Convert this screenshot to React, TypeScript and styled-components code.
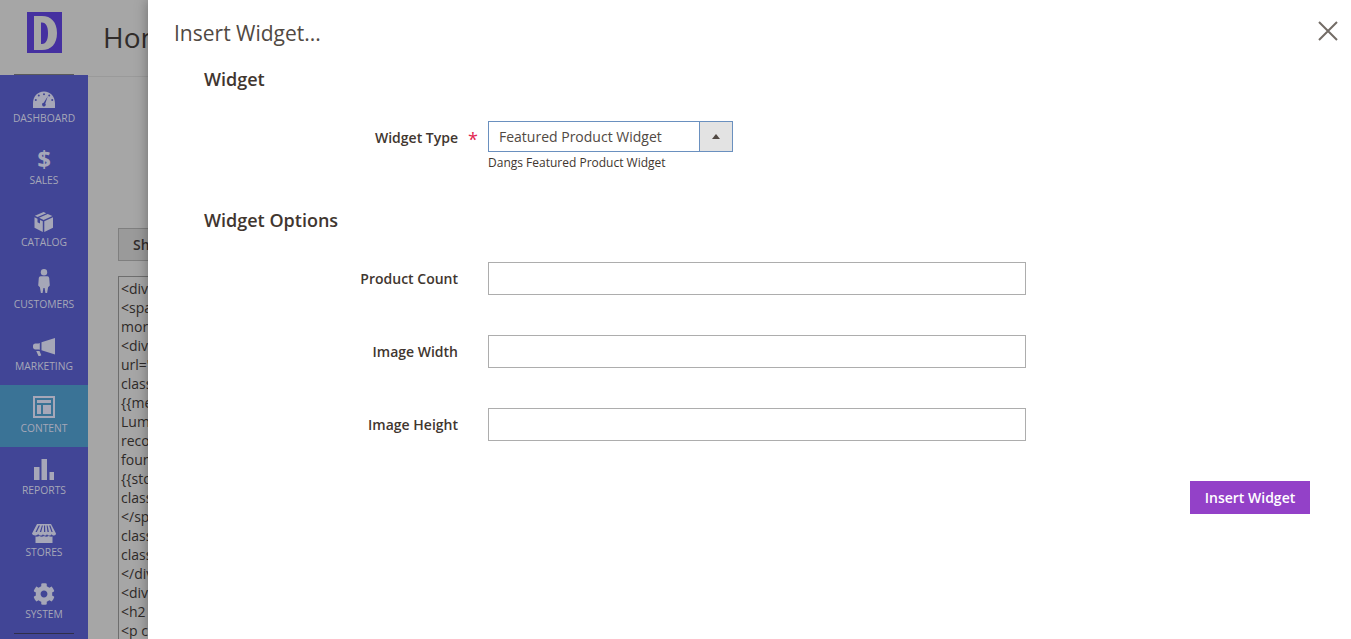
import React from 'react';
import {FaCog} from 'react-icons/fa';
import styled, {createGlobalStyle} from 'styled-components';

const GlobalStyle = createGlobalStyle`
  html, body {
    margin: 0;
    padding: 0;
    background: #a6a6a6;
  }
  body {
    font-family: "Open Sans", "Liberation Sans", sans-serif;
    overflow: hidden;
  }
  * {
    box-sizing: border-box;
  }
`;

const SOURCE_LINES = [
  '<div class="blocks-promo">',
  '<span class="content bg-white"><strong>New Luma Yoga Collection</strong> Get fit and look fab',
  'more',
  '<div data-content-type="html"',
  'url="{{store url=""}}"',
  'class="block-promo home-main">',
  '{{media url="wysiwyg/home/home-main.jpg"}}',
  'Luma',
  'recommends',
  'found',
  '{{store url="collections/yoga-new.html"}}',
  'class="action more button"',
  '</span>',
  'class="block-promo home-pants"',
  'class="content"',
  '</div>',
  '<div class="content-heading">',
  '<h2 class="title">Hot Sellers</h2>',
  '<p class="info">',
];

const DashboardIcon = () => (
  <svg viewBox="0 0 24 24" fill="currentColor">
    <path
      fillRule="evenodd"
      d="M12 6.500C5.600 6.500 1 11.600 1 18.200V23h22v-4.800C23 11.600 18.400 6.500 12 6.500ZM12 8.200a1 1 0 1 1 0 2 1 1 0 0 1 0-2ZM6.800 9.600a1 1 0 1 1 0 2 1 1 0 0 1 0-2ZM17.200 9.600a1 1 0 1 1 0 2 1 1 0 0 1 0-2ZM3.800 14a1 1 0 1 1 0 2 1 1 0 0 1 0-2ZM20.200 14a1 1 0 1 1 0 2 1 1 0 0 1 0-2ZM15.800 11.300l-2.500 7.100a1.800 1.800 0 1 1-1.600-.6l4.100-6.500Z"
    />
  </svg>
);

const CatalogIcon = () => (
  <svg viewBox="0 0 24 24" fill="currentColor">
    <path d="M11.600 3 2.900 6.800l2.700 1.300 8.700-3.900-2.700-1.200ZM15.700 4.900 7.100 8.800l4.500 2.100 8.800-3.900-4.700-2.100ZM2.500 8.300v10.500l8.300 4.200V12.300L8 11v3.500L5.500 13.300V9.700L2.500 8.300ZM21 8.300l-8.700 4V23l8.700-4.200V8.300Z" />
  </svg>
);

const CustomersIcon = () => (
  <svg viewBox="0 0 24 24" fill="currentColor">
    <circle cx="12" cy="1.200" r="3.200" />
    <path d="M8.700 5.200h6.600c1.100 0 1.800.8 1.900 1.900l.6 7.400-1.700 1.800-1 5.700h-1.700l-.8-5h-1.200l-.8 5H8.900l-1-5.700-1.700-1.800.6-7.400c.1-1.100.8-1.900 1.900-1.900Z" />
  </svg>
);

const MarketingIcon = () => (
  <svg viewBox="0 0 24 24" fill="currentColor">
    <path d="M23 5v16.500L9.500 17.200V9.300L23 5ZM7.800 10v6.700l-1.300-.2H3.400C2 16.500 1 15.400 1 14.300v-1.600c0-1.200 1-2.200 2.400-2.200h3.100l1.300-.500ZM4.200 18h3.300l1.800 4.300-1.300.7H6.500L4.200 18Z" />
  </svg>
);

const ContentIcon = () => (
  <svg viewBox="0 0 24 24" fill="currentColor">
    <path
      fillRule="evenodd"
      d="M1 1h22v22H1V1Zm2 2v18h18V3H3Zm2 2h14v3H5V5Zm0 5h4v9H5v-9Zm6 0h8v9h-8v-9Z"
    />
  </svg>
);

const ReportsIcon = () => (
  <svg viewBox="0 0 24 24" fill="currentColor">
    <path d="M2 10h5.500v13H2V10ZM9.500 2H15v21H9.500V2ZM17.500 15H22v8h-4.500v-8Z" />
  </svg>
);

const StoresIcon = () => (
  <svg viewBox="0 0 24 24" fill="currentColor">
    <path
      fillRule="evenodd"
      d="M5 5h14l5 9.500c0 1.300-1 2-2 2s-2-.4-2.400-1.300c-.4.900-1.300 1.300-2.300 1.300s-1.900-.4-2.300-1.300c-.4.900-1.300 1.300-2 1.300s-1.600-.4-2-1.300c-.4.900-1.300 1.300-2.300 1.300s-1.900-.4-2.300-1.300C4.900 16.100 4 16.500 3 16.500s-3-.7-3-2L5 5Zm1.600 1.600L3.500 13h1.300l3.200-6.400H6.600Zm3.300 0L7.800 13h1.400l1.700-6.400h-1Zm2.100 0V13h1.300L13.100 6.600H12Zm2.600 0L15.500 13h1.400l-1.300-6.400h-1Zm2.500 0L19.500 13h1.200l-2.300-6.400h-1.300Z"
    />
    <path d="M3.500 17.600c1.400.3 2.800 0 3.800-.6 1.400.8 3.200.9 4.700 0 1.500.9 3.300.8 4.700 0 1 .6 2.400.9 3.800.6V24h-17v-6.400Z" />
  </svg>
);

const NAV_ITEMS = [
  {label: 'Dashboard', icon: <DashboardIcon />},
  {label: 'Sales', glyph: '$'},
  {label: 'Catalog', icon: <CatalogIcon />},
  {label: 'Customers', icon: <CustomersIcon />},
  {label: 'Marketing', icon: <MarketingIcon />},
  {label: 'Content', icon: <ContentIcon />, active: true},
  {label: 'Reports', icon: <ReportsIcon />},
  {label: 'Stores', icon: <StoresIcon />},
  {label: 'System', icon: <SystemIcon />},
];

const WIDGET_OPTIONS = ['Product Count', 'Image Width', 'Image Height'];

export default function App() {
  return (
    <Page>
      <GlobalStyle />
      <Sidebar>
        <LogoCell>
          <LogoMark>
            <svg viewBox="0 0 35 41" width="35" height="41">
              <rect width="35" height="41" fill="#4530a0" />
              <path
                fill="#a6a6a6"
                fillRule="evenodd"
                d="M7 4h8c9 0 15 6 15 17s-6 17-15 17H7V4Zm7 6.500v21.500h1c4 0 6-4 6-10.700s-2-10.800-6-10.800h-1Z"
              />
            </svg>
          </LogoMark>
        </LogoCell>
        {NAV_ITEMS.map(item => (
          <NavItem key={item.label} $active={item.active}>
            <NavIcon>
              {item.glyph ? <DollarGlyph>{item.glyph}</DollarGlyph> : item.icon}
            </NavIcon>
            <NavLabel>{item.label}</NavLabel>
          </NavItem>
        ))}
        <NavDivider />
      </Sidebar>

      <Main>
        <PageHeader>
          <PageTitle>Home page</PageTitle>
        </PageHeader>
        <ShowButton>Show / Hide Editor</ShowButton>
        <SourceBox>
          {SOURCE_LINES.map((line, i) => (
            <SourceLine key={i}>{line}</SourceLine>
          ))}
        </SourceBox>
      </Main>

      <Modal>
        <ModalHeader>
          <ModalTitle>Insert Widget...</ModalTitle>
          <CloseButton aria-label="Close">
            <svg viewBox="0 0 20 20" width="20" height="20">
              <path
                d="M1 1l18 18M19 1L1 19"
                stroke="#736c66"
                strokeWidth="2"
                fill="none"
              />
            </svg>
          </CloseButton>
        </ModalHeader>

        <ModalBody>
          <SectionTitle>Widget</SectionTitle>
          <TypeRow>
            <TypeLabel>
              Widget Type<Required>*</Required>
            </TypeLabel>
            <div>
              <SelectBox>
                <SelectValue>Featured Product Widget</SelectValue>
                <SelectArrow>
                  <svg viewBox="0 0 8 5" width="8" height="5">
                    <path d="M4 0l4 5H0z" fill="#514943" />
                  </svg>
                </SelectArrow>
              </SelectBox>
              <FieldHint>Dangs Featured Product Widget</FieldHint>
            </div>
          </TypeRow>

          <OptionsTitle>Widget Options</OptionsTitle>
          <OptionList>
            {WIDGET_OPTIONS.map(option => (
              <FormRow key={option}>
                <FieldLabel>{option}</FieldLabel>
                <TextInput type="text" />
              </FormRow>
            ))}
          </OptionList>

          <Actions>
            <PrimaryButton>Insert Widget</PrimaryButton>
          </Actions>
        </ModalBody>
      </Modal>
    </Page>
  );
}

function SystemIcon() {
  return <GearIcon />;
}

const Page = styled.div`
  position: relative;
  display: flex;
  width: 1351px;
  height: 639px;
  overflow: hidden;
  background: #a6a6a6;
`;

const Sidebar = styled.nav`
  flex: 0 0 88px;
  display: flex;
  flex-direction: column;
  background: #414596;
`;

const LogoCell = styled.div`
  position: relative;
  flex: 0 0 75px;
  display: flex;
  align-items: flex-start;
  justify-content: center;
  padding-top: 12px;
  background: #a6a6a6;
  &::after {
    content: '';
    position: absolute;
    left: 14px;
    bottom: 0;
    width: 60px;
    height: 1px;
    background: #5a5a5a;
  }
`;

const LogoMark = styled.div`
  width: 35px;
  height: 41px;
  svg {
    display: block;
  }
`;

const NavItem = styled.a<{$active?: boolean}>`
  flex: 0 0 62px;
  display: flex;
  flex-direction: column;
  align-items: center;
  padding-top: 10px;
  color: #a6a7b8;
  background: ${p => (p.$active ? '#3a7396' : 'transparent')};
`;

const NavIcon = styled.span`
  display: block;
  width: 24px;
  height: 24px;
  svg {
    display: block;
    width: 24px;
    height: 24px;
    overflow: visible;
  }
`;

const GearIcon = styled(FaCog)`
  && {
    width: 22px;
    height: 22px;
    margin: 2px 1px 0;
  }
`;

const DollarGlyph = styled.span`
  display: block;
  text-align: center;
  font-size: 24px;
  line-height: 24px;
  font-weight: 700;
`;

const NavLabel = styled.span`
  margin-top: 2px;
  font-size: 10.300px;
  line-height: 14px;
  text-transform: uppercase;
`;

const NavDivider = styled.div`
  flex: 0 0 1px;
  width: 60px;
  margin: 0 auto;
  background: #2f2f4a;
`;

const Main = styled.main`
  flex: 1;
  min-width: 0;
`;

const PageHeader = styled.header`
  height: 77px;
  padding: 18px 15px 0;
  border-bottom: 1px solid #9a9a9a;
`;

const PageTitle = styled.h1`
  margin: 0;
  font-size: 28px;
  line-height: 38px;
  font-weight: 400;
  color: #302c2a;
  white-space: nowrap;
`;

const ShowButton = styled.div`
  width: 170px;
  height: 33px;
  margin: 151px 0 0 30px;
  padding-left: 14px;
  border: 1px solid #7f7f7f;
  background: #9a9a9a;
  font-size: 14px;
  font-weight: 600;
  line-height: 31px;
  color: #302c2a;
  white-space: nowrap;
`;

const SourceBox = styled.div`
  width: 900px;
  height: 400px;
  margin: 15px 0 0 30px;
  padding: 2px 2px;
  border: 1px solid #6e6e6e;
  font-size: 14px;
  line-height: 19px;
  color: #2e2a28;
`;

const SourceLine = styled.div`
  white-space: nowrap;
`;

const Modal = styled.section`
  position: absolute;
  top: 0;
  right: 0;
  bottom: 0;
  left: 148px;
  background: #fff;
  box-shadow: 0 0 12px rgba(0, 0, 0, 0.35);
`;

const ModalHeader = styled.header`
  display: flex;
  align-items: flex-start;
  justify-content: space-between;
  padding: 19px 13px 0 26px;
`;

const ModalTitle = styled.h2`
  margin: 0;
  font-size: 21px;
  line-height: 29px;
  font-weight: 400;
  color: #514943;
`;

const CloseButton = styled.button`
  margin-top: 2px;
  padding: 0;
  border: 0;
  background: none;
  svg {
    display: block;
  }
`;

const ModalBody = styled.div`
  padding: 18px 41px 0 56px;
`;

const SectionTitle = styled.h3`
  margin: 0;
  font-size: 18px;
  line-height: 26px;
  font-weight: 600;
  color: #41362f;
`;

const OptionsTitle = styled(SectionTitle)`
  margin-top: 36px;
`;

const FormRow = styled.div`
  display: grid;
  grid-template-columns: 254px 538px;
  column-gap: 30px;
  align-items: center;
`;

const TypeRow = styled(FormRow)`
  align-items: start;
  margin-top: 29px;
`;

const FieldLabel = styled.label`
  position: relative;
  display: block;
  font-size: 14px;
  line-height: 31px;
  font-weight: 600;
  text-align: right;
  color: #41362f;
`;

const TypeLabel = styled(FieldLabel)`
  padding-top: 1px;
`;

const Required = styled.span`
  position: absolute;
  left: 264px;
  top: 3px;
  font-size: 18px;
  font-weight: 400;
  color: #e22650;
`;

const SelectBox = styled.div`
  display: flex;
  width: 245px;
  height: 31px;
  border: 1px solid #6a90bf;
`;

const SelectValue = styled.div`
  flex: 1;
  padding-left: 10px;
  font-size: 14px;
  line-height: 29px;
  color: #514943;
`;

const SelectArrow = styled.div`
  flex: 0 0 33px;
  display: flex;
  align-items: center;
  justify-content: center;
  border-left: 1px solid #6a90bf;
  background: #e3e3e3;
`;

const FieldHint = styled.div`
  margin-top: 2px;
  font-size: 12px;
  line-height: 17px;
  color: #41362f;
`;

const OptionList = styled.div`
  display: flex;
  flex-direction: column;
  gap: 40px;
  margin-top: 29px;
`;

const TextInput = styled.input`
  display: block;
  width: 538px;
  height: 33px;
  padding: 0 10px;
  border: 1px solid #adadad;
  border-radius: 0;
  background: #fff;
  outline: none;
`;

const Actions = styled.div`
  display: flex;
  justify-content: flex-end;
  margin-top: 40px;
`;

const PrimaryButton = styled.button`
  width: 120px;
  height: 33px;
  padding: 0;
  border: 0;
  background: #9341c8;
  font-family: inherit;
  font-size: 14px;
  font-weight: 600;
  color: #fff;
`;
